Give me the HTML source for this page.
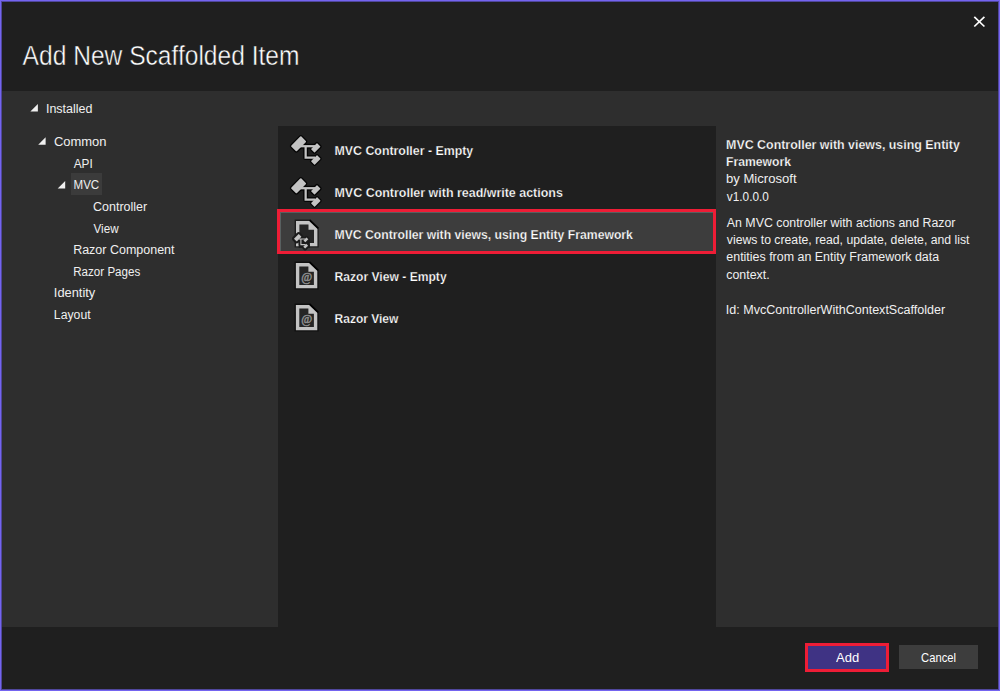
<!DOCTYPE html>
<html lang="en">
<head>
<meta charset="utf-8">
<title>Add New Scaffolded Item</title>
<style>
html,body{margin:0;padding:0;}
body{width:1000px;height:691px;overflow:hidden;background:#1f1f1f;position:relative;font-family:"Liberation Sans",sans-serif;}
ul,li,h1,h2,p{margin:0;padding:0;list-style:none;font-weight:400;}
#win{position:absolute;left:0;top:0;width:998px;height:689px;border:1px solid #7464f0;background:#1f1f1f;box-shadow:inset 0 0 0 1px #50479c;}
#band{position:absolute;left:2px;top:91px;width:996px;height:536px;background:#2e2e2e;}
#list{position:absolute;left:278px;top:126px;width:438px;height:501px;background:#1f1f1f;}
#treesel{position:absolute;left:71px;top:173px;width:31px;height:22px;background:#3b3b3b;}
#rowsel{position:absolute;left:277px;top:209px;width:433px;height:39px;border:3px solid #ee1d36;background:#3d3d3d;box-shadow:inset 1px 1px 0 #586060;}
button{position:absolute;box-sizing:content-box;margin:0;padding:0;font:inherit;color:inherit;border-radius:0;outline:0;overflow:visible;text-align:left;display:block;}
#add{left:805px;top:643px;width:78px;height:23px;border:3px solid #ee1d36;background:#3f3384;}
#cancel{left:899px;top:645px;width:79px;height:24px;border:0;background:#3d3d3d;}
.t{position:absolute;white-space:pre;line-height:1;transform-origin:0 0;display:block;}
svg{position:absolute;left:0;top:0;}
</style>
</head>
<body>
<div id="win"></div>
<div id="band"></div>
<div id="list"></div>
<div id="treesel"></div>
<div id="rowsel"></div>
<svg width="1000" height="691" viewBox="0 0 1000 691">
<defs>
<g id="mvcshape">
  <rect x="-7.1" y="-3.95" width="14.2" height="7.9" rx="0.9" transform="translate(298.6,143.8) rotate(-45)"/>
  <rect x="-4.3" y="-2.55" width="8.6" height="5.1" rx="0.6" transform="translate(315.75,147.85) rotate(-45)"/>
  <rect x="-4.3" y="-2.55" width="8.6" height="5.1" rx="0.6" transform="translate(315.8,160) rotate(-45)"/>
</g>
<g id="mvclines">
  <polyline points="300,146.2 315,146.2"/>
  <polyline points="305.65,146.2 305.65,157.65 315,157.65"/>
</g>
<g id="mvc">
  <g fill="#050505" stroke="#050505" stroke-linejoin="round">
    <use href="#mvcshape" stroke-width="2.6"/>
    <use href="#mvclines" fill="none" stroke-width="4.9"/>
  </g>
  <g fill="#c3c3c3" stroke="#c3c3c3">
    <use href="#mvcshape" stroke="none"/>
    <use href="#mvclines" fill="none" stroke-width="2.25"/>
  </g>
</g>
<g id="doc">
  <polygon points="-1.4,-1.4 14.4,-1.4 22.8,6.7 22.8,26.6 -1.4,26.6" fill="#000" opacity="0.5"/>
  <polygon points="0,0 13.9,0 21.4,7.2 21.4,25.2 0,25.2" fill="#c3c3c3"/>
  <polygon points="3.4,3.5 12.5,3.5 12.5,8.8 18,8.8 18,22 3.4,22" fill="#252525"/>
  <polyline points="13.6,-0.9 22.2,7.4" stroke="#000" stroke-width="1.8" fill="none"/>
</g>
</defs>
<use href="#mvc"/>
<use href="#mvc" y="42"/>
<!-- row3 doc + mini mvc -->
<use href="#doc" x="296" y="221"/>
<g>
  <g fill="#1c1c1c" stroke="#1c1c1c" stroke-linejoin="round">
    <rect x="-3.4" y="-1.95" width="6.8" height="3.9" rx="0.4" transform="translate(297.7,237.7) rotate(-45)" stroke-width="4.2"/>
    <rect x="298.6" y="240" width="11.3" height="7.9" stroke="none"/>
    <rect x="-2.1" y="-1.3" width="4.2" height="2.6" transform="translate(305.9,239.9) rotate(-45)" stroke-width="3.2"/>
    <rect x="-2.1" y="-1.3" width="4.2" height="2.6" transform="translate(305.7,246.2) rotate(-45)" stroke-width="3.6"/>
    <polyline points="299,239 305.5,239" fill="none" stroke-width="4.2"/>
    <polyline points="300.9,239 300.9,244.6 305.5,244.6" fill="none" stroke-width="4.4"/>
  </g>
  <g fill="#c3c3c3" stroke="#c3c3c3">
    <rect x="-3.4" y="-1.95" width="6.8" height="3.9" rx="0.4" transform="translate(297.7,237.7) rotate(-45)" stroke="none"/>
    <rect x="-2.1" y="-1.3" width="4.2" height="2.6" transform="translate(305.9,239.9) rotate(-45)" stroke="none"/>
    <rect x="-2.1" y="-1.3" width="4.2" height="2.6" transform="translate(305.7,246.2) rotate(-45)" stroke="none"/>
    <polyline points="299,239 305.5,239" fill="none" stroke-width="1"/>
    <polyline points="300.9,239 300.9,244.6 305.5,244.6" fill="none" stroke-width="1.1"/>
  </g>
</g>
<use href="#doc" x="295.9" y="263"/>
<use href="#doc" x="295.9" y="305"/>
<text x="306.6" y="280.8" font-family="'Liberation Serif',serif" font-size="11.8" fill="#8c8c8c" stroke="#8c8c8c" stroke-width="0.5" text-anchor="middle">@</text>
<text x="306.6" y="322.8" font-family="'Liberation Serif',serif" font-size="11.8" fill="#8c8c8c" stroke="#8c8c8c" stroke-width="0.5" text-anchor="middle">@</text>
<!-- tree arrows -->
<g fill="#f0f0f0">
<polygon points="37.9,104.0 37.9,111.5 30.4,111.5"/>
<polygon points="45.6,137.3 45.6,144.7 38.2,144.7"/>
<polygon points="65.2,180.9 65.2,188.4 57.7,188.4"/>
</g>
<!-- close X -->
<g stroke="#ffffff" stroke-width="1.7" stroke-linecap="butt">
<line x1="974.3" y1="16.9" x2="984.4" y2="26.5"/>
<line x1="984.4" y1="16.9" x2="974.3" y2="26.5"/>
</g>
</svg>

<header>
<h1 class="t title" style="left:22px;top:42px;font-size:27px;font-weight:400;color:#ffffff;-webkit-text-stroke:0.45px #1f1f1f;transform:translate(0.60px,0.60px) scaleX(0.9104)">Add New Scaffolded Item</h1>
</header>
<nav aria-label="Categories">
<ul>
<li class="t " style="left:45px;top:103px;font-size:12.5px;font-weight:400;color:#f0f0f0;transform:translate(0.95px,0.10px) scaleX(0.9978)">Installed</li>
<li class="t " style="left:53px;top:135px;font-size:12.5px;font-weight:400;color:#f0f0f0;transform:translate(0.93px,0.90px) scaleX(1.0374)">Common</li>
<li class="t " style="left:73px;top:157px;font-size:12.5px;font-weight:400;color:#f0f0f0;transform:translate(0.65px,0.55px) scaleX(0.9447)">API</li>
<li class="t " style="left:73px;top:179px;font-size:12.5px;font-weight:400;color:#f0f0f0;transform:translate(0.53px,0.20px) scaleX(0.9238)">MVC</li>
<li class="t " style="left:93px;top:200px;font-size:12.5px;font-weight:400;color:#f0f0f0;transform:translate(0.05px,0.85px) scaleX(0.9972)">Controller</li>
<li class="t " style="left:93px;top:222px;font-size:12.5px;font-weight:400;color:#f0f0f0;transform:translate(0.55px,0.50px) scaleX(0.9327)">View</li>
<li class="t " style="left:73px;top:244px;font-size:12.5px;font-weight:400;color:#f0f0f0;transform:translate(0.15px,0.15px) scaleX(0.9990)">Razor Component</li>
<li class="t " style="left:73px;top:265px;font-size:12.5px;font-weight:400;color:#f0f0f0;transform:translate(0.22px,0.80px) scaleX(0.9279)">Razor Pages</li>
<li class="t " style="left:53px;top:287px;font-size:12.5px;font-weight:400;color:#f0f0f0;transform:translate(0.82px,0.45px) scaleX(1.0280)">Identity</li>
<li class="t " style="left:53px;top:309px;font-size:12.5px;font-weight:400;color:#f0f0f0;transform:translate(0.87px,0.10px) scaleX(0.9795)">Layout</li>
</ul>
</nav>
<main>
<ul>
<li class="t " style="left:334px;top:144px;font-size:12.5px;font-weight:700;color:#ffffff;-webkit-text-stroke:0.25px #1f1f1f;transform:translate(0.51px,0.70px) scaleX(0.9889)">MVC Controller - Empty</li>
<li class="t " style="left:334px;top:186px;font-size:12.5px;font-weight:700;color:#ffffff;-webkit-text-stroke:0.25px #1f1f1f;transform:translate(0.50px,0.70px) scaleX(0.9963)">MVC Controller with read/write actions</li>
<li class="t " style="left:334px;top:228px;font-size:12.5px;font-weight:700;color:#ffffff;-webkit-text-stroke:0.25px #3d3d3d;transform:translate(0.52px,0.70px) scaleX(0.9764)">MVC Controller with views, using Entity Framework</li>
<li class="t " style="left:334px;top:270px;font-size:12.5px;font-weight:700;color:#ffffff;-webkit-text-stroke:0.25px #1f1f1f;transform:translate(0.52px,0.70px) scaleX(0.9683)">Razor View - Empty</li>
<li class="t " style="left:334px;top:312px;font-size:12.5px;font-weight:700;color:#ffffff;-webkit-text-stroke:0.25px #1f1f1f;transform:translate(0.53px,0.70px) scaleX(0.9605)">Razor View</li>
</ul>
</main>
<aside>
<h2 class="t " style="left:726px;top:138px;font-size:12.5px;font-weight:700;color:#ffffff;-webkit-text-stroke:0.25px #2e2e2e;transform:translate(0.06px,0.70px) scaleX(0.9928)">MVC Controller with views, using Entity</h2>
<h2 class="t " style="left:726px;top:155px;font-size:12.5px;font-weight:700;color:#ffffff;-webkit-text-stroke:0.25px #2e2e2e;transform:translate(0.07px,0.70px) scaleX(0.9727)">Framework</h2>
<p class="t " style="left:726px;top:173px;font-size:12.5px;font-weight:400;color:#f0f0f0;transform:translate(0.02px,0.10px) scaleX(1.0466)">by Microsoft</p>
<p class="t " style="left:726px;top:190px;font-size:12.5px;font-weight:400;color:#f0f0f0;transform:translate(0.80px,0.70px) scaleX(0.9455)">v1.0.0.0</p>
<p class="t " style="left:726px;top:216px;font-size:12.5px;font-weight:400;color:#f0f0f0;transform:translate(0.80px,0.70px) scaleX(0.9885)">An MVC controller with actions and Razor</p>
<p class="t " style="left:726px;top:234px;font-size:12.5px;font-weight:400;color:#f0f0f0;transform:translate(0.80px,0.10px) scaleX(0.9782)">views to create, read, update, delete, and list</p>
<p class="t " style="left:726px;top:251px;font-size:12.5px;font-weight:400;color:#f0f0f0;transform:translate(0.30px,0.10px) scaleX(0.9948)">entities from an Entity Framework data</p>
<p class="t " style="left:726px;top:268px;font-size:12.5px;font-weight:400;color:#f0f0f0;transform:translate(0.31px,0.50px) scaleX(0.9893)">context.</p>
<p class="t " style="left:725px;top:303px;font-size:12.5px;font-weight:400;color:#f0f0f0;transform:translate(0.80px,0.50px) scaleX(1.0032)">Id: MvcControllerWithContextScaffolder</p>
</aside>
<footer>
<button id="add" type="button"><span class="t " style="left:28px;top:5px;font-size:13.5px;font-weight:400;color:#ffffff;transform:translate(0.00px,0.00px) scaleX(0.9634)">Add</span></button>
<button id="cancel" type="button"><span class="t " style="left:22px;top:5px;font-size:13.5px;font-weight:400;color:#ffffff;transform:translate(0.08px,0.90px) scaleX(0.8296)">Cancel</span></button>
</footer>
</body>
</html>
